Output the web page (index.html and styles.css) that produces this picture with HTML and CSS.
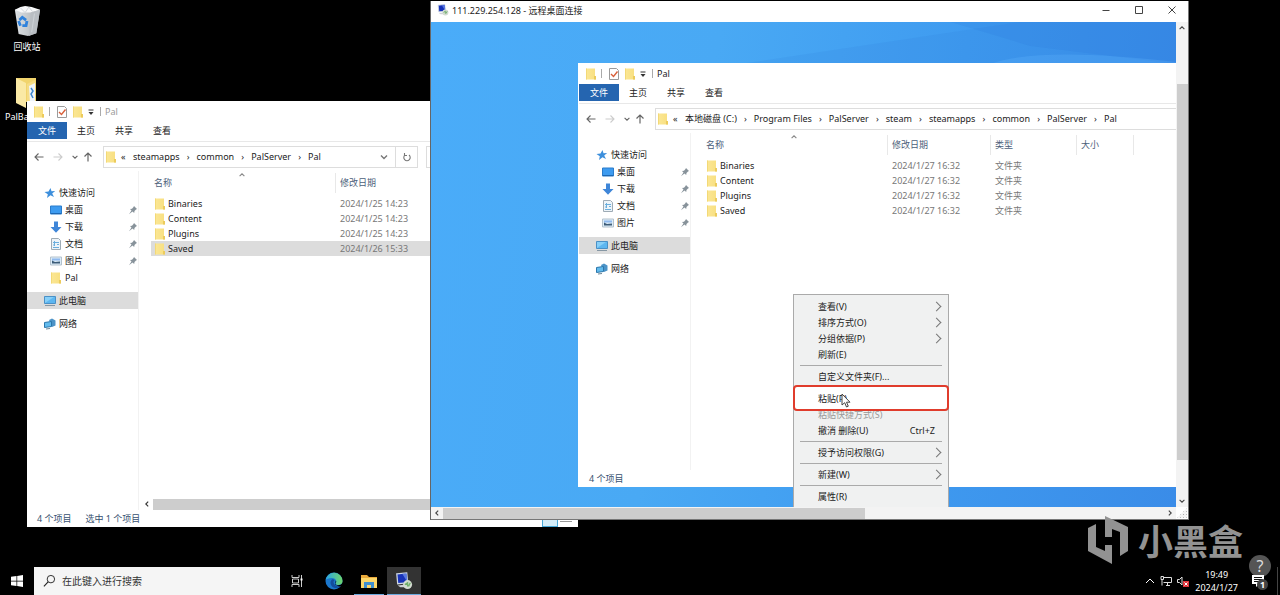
FILE: index.html
```
<!DOCTYPE html>
<html lang="zh-CN">
<head>
<meta charset="utf-8">
<title>远程桌面连接</title>
<link rel="stylesheet" href="styles.css">
</head>
<body>
<svg class="defs" aria-hidden="true">
  <linearGradient id="gFolder" x1="0" y1="0" x2="1" y2="0"><stop offset="0" stop-color="#fbe795"/><stop offset="1" stop-color="#f8df80"/></linearGradient>
  <linearGradient id="gEdge" x1="0" y1="0" x2="1" y2="0"><stop offset="0" stop-color="#2aa6e6"/><stop offset="1" stop-color="#6fd66a"/></linearGradient>
  <linearGradient id="gBin" x1="0" y1="0" x2="1" y2="0"><stop offset="0" stop-color="#dfe3e6"/><stop offset="1" stop-color="#a9afb4"/></linearGradient>
  <symbol id="folder" viewBox="0 0 12 12"><path d="M1 .5h9v8h1v3H1z" fill="url(#gFolder)"/><path d="M9 8h2v3.500H9z" fill="#eccb5c"/><path d="M1 .5h1v11H1z" fill="#f3d977"/></symbol>
  <symbol id="check" viewBox="0 0 12 12"><path d="M1.500.5h7l2 2v9h-9z" fill="#fff" stroke="#9b9b9b"/><path d="M3 6l2.500 2.500L9.500 3.500" fill="none" stroke="#d9603a" stroke-width="1.400"/></symbol>
  <symbol id="more" viewBox="0 0 8 8"><path d="M1.500 2h5" stroke="#333"/><path d="M1.500 4h5L4 7z" fill="#333"/></symbol>
  <symbol id="star" viewBox="0 0 12 12"><path d="M6.500 1l1 3.300 3.700-.3-3 2.500 1.800 3.500-3.500-1.800L3 11l.8-3.800L.5 5l4-.5z" fill="#3d8fdc"/></symbol>
  <symbol id="desk" viewBox="0 0 12 12"><path d="M.5 2h11v8H.5z" fill="#3d9bf0" stroke="#2b7ccb"/><path d="M1 9h10v1H1z" fill="#1e67b1"/></symbol>
  <symbol id="down" viewBox="0 0 12 12"><path d="M4 .5h4V6h3.500L6 11.800.5 6H4z" fill="#3f86d8"/></symbol>
  <symbol id="doc" viewBox="0 0 12 12"><path d="M1.500.5h7l2 2v9h-9z" fill="#edf4f9" stroke="#9eabb5"/><path d="M3 4.500h6M3 7h2M7 6.500h2M3 9.500h6M4.500 3v5" stroke="#6aaedd"/></symbol>
  <symbol id="pic" viewBox="0 0 12 12"><path d="M.5 2h11v8H.5z" fill="#dcecf8" stroke="#b4c2cd"/><path d="M2 3.500h8v2H2z" fill="#8fb9ee"/><path d="M2 5.500l3 1.500 5-.5v2H2z" fill="#3d5c78"/></symbol>
  <symbol id="pc" viewBox="0 0 12 12"><path d="M.5 1.500h11v7H.5z" fill="#5db6f0" stroke="#4a90c6"/><path d="M1 8L10 2H1z" fill="#87cff8"/><path d="M1 10.500h10" stroke="#8697a4"/></symbol>
  <symbol id="net" viewBox="0 0 12 12"><path d="M5 2l3-1.500 3.500 2v5L8 9z" fill="#4c93c7"/><path d="M.5 4.500l7-1v5l-7 1z" fill="#62bbed" stroke="#2b76ab"/><path d="M2 11l4-.5" stroke="#6d8594"/></symbol>
  <symbol id="pin" viewBox="0 0 10 10"><path d="M6 1l3 3-1 .5-1.500 1.500-.3 2L4.500 6.500 1 9.300 3.500 5.500 2 4l2-.3L5.500 2z" fill="#87929a"/></symbol>
  <symbol id="back" viewBox="0 0 10 10"><path d="M9.500 5H1M4.500 1.500L1 5l3.500 3.500" fill="none" stroke="currentColor" stroke-width="1.100"/></symbol>
  <symbol id="fwd" viewBox="0 0 10 10"><path d="M.5 5H9M5.500 1.500L9 5 5.500 8.500" fill="none" stroke="currentColor" stroke-width="1.100"/></symbol>
  <symbol id="up" viewBox="0 0 10 10"><path d="M5 9.500V1M1.500 4.500L5 1l3.500 3.500" fill="none" stroke="currentColor" stroke-width="1.200"/></symbol>
  <symbol id="chev" viewBox="0 0 10 10"><path d="M2 3.500l3 3 3-3" fill="none" stroke="currentColor" stroke-width="1.400"/></symbol>
  <symbol id="rdp" viewBox="0 0 20 20"><path d="M2 2l11-1 1 11-11 1z" fill="#1732b8" stroke="#cfd8e4" stroke-width="1.400"/><path d="M8 2l5-.4.8 9.500z" fill="#5877e0"/><path d="M3 15l9-1 2 3H6z" fill="#cdd1d5"/><circle cx="14" cy="14" r="5" fill="#d3dbd1"/><path d="M11 14l3-2v4M17 12l-2 4" stroke="#6fae6a" stroke-width="1.500" fill="none"/></symbol>
</svg>

<main class="desktop">
  <div class="shortcut bin">
    <svg viewBox="0 0 30 34"><path d="M2 5h27l-4 25-9 3-10-2z" fill="url(#gBin)"/><path d="M2 5l6-3 5-1 7 1 9 3-10 3H9z" fill="#f7f8f9"/><path d="M19 8l10-3-4 25-8 3z" fill="#b9bec3"/><path d="M5 9l4 20M23 9l-3 20M8 3l5 5 4-6 4 5" stroke="#cfd4d8" fill="none"/><path d="M7 16l3-3 4 3M15 17l-1 5-4 0M8 22l-2-5" stroke="#2f82dc" stroke-width="3" fill="none"/></svg>
    <span>回收站</span>
  </div>
  <div class="shortcut pal">
    <svg viewBox="0 0 26 32"><path d="M2 1h20v24H2z" fill="#f1d46d"/><path d="M2 1l10 5v25L2 26z" fill="#fae9a5"/><path d="M13 7l8-4v22h-8z" fill="#f5dc86"/><path d="M15 9l6-3v20h-5z" fill="#eef4fa"/><path d="M17 11l2 3-2 3 2 4" stroke="#3c86cf" stroke-width="1.500" fill="none"/></svg>
    <span>PalBackup</span>
  </div>

  <section class="explorer local" aria-label="Pal">
    <header class="caption inactive"><svg class="i12"><use href="#folder"/></svg><i class="bar"></i><svg class="i12"><use href="#check"/></svg><svg class="i12"><use href="#folder"/></svg><svg class="i8"><use href="#more"/></svg><i class="bar"></i><span>Pal</span></header>
    <nav class="tabs"><button class="tab file">文件</button><button class="tab">主页</button><button class="tab">共享</button><button class="tab">查看</button></nav>
    <div class="toolbar">
      <div class="nav"><button aria-label="后退"><svg class="i10"><use href="#back"/></svg></button><button class="off" aria-label="前进"><svg class="i10"><use href="#fwd"/></svg></button><button class="small" aria-label="最近"><svg class="i8"><use href="#chev"/></svg></button><button class="small" aria-label="上移"><svg class="i10"><use href="#up"/></svg></button></div>
      <div class="address short">
        <svg class="i12"><use href="#folder"/></svg><span class="lead">«</span>
        <a href="#">steamapps</a><b>›</b><a href="#">common</a><b>›</b><a href="#">PalServer</a><b>›</b><a href="#">Pal</a>
        <button class="drop" aria-label="历史"><svg class="i10"><use href="#chev"/></svg></button>
        <button class="refresh" aria-label="刷新"><svg viewBox="0 0 10 10" class="i10"><path d="M3 3a3.200 3.200 0 1 0 4 0M2.500 1v2.500H5" fill="none" stroke="#777" stroke-width="1.100"/></svg></button>
      </div>
      <input class="find" aria-label="搜索">
    </div>
    <div class="body">
      <ul class="tree">
        <li><svg class="i12"><use href="#star"/></svg>快速访问</li>
        <li class="sub"><svg class="i12"><use href="#desk"/></svg>桌面<svg class="pin"><use href="#pin"/></svg></li>
        <li class="sub"><svg class="i12"><use href="#down"/></svg>下载<svg class="pin"><use href="#pin"/></svg></li>
        <li class="sub"><svg class="i12"><use href="#doc"/></svg>文档<svg class="pin"><use href="#pin"/></svg></li>
        <li class="sub"><svg class="i12"><use href="#pic"/></svg>图片<svg class="pin"><use href="#pin"/></svg></li>
        <li class="sub"><svg class="i12"><use href="#folder"/></svg>Pal</li>
        <li class="current"><svg class="i12"><use href="#pc"/></svg>此电脑</li>
        <li><svg class="i12"><use href="#net"/></svg>网络</li>
      </ul>
      <div class="files">
        <table>
          <colgroup><col class="c-name"><col class="c-date"><col class="c-type"><col class="c-size"><col></colgroup>
          <thead><tr><th class="sorted">名称<svg class="i8 caret"><use href="#chev"/></svg></th><th>修改日期</th><th>类型</th><th>大小</th><th></th></tr></thead>
          <tbody>
            <tr><td><svg class="i12"><use href="#folder"/></svg>Binaries</td><td>2024/1/25 14:23</td><td>文件夹</td><td></td><td></td></tr>
            <tr><td><svg class="i12"><use href="#folder"/></svg>Content</td><td>2024/1/25 14:23</td><td>文件夹</td><td></td><td></td></tr>
            <tr><td><svg class="i12"><use href="#folder"/></svg>Plugins</td><td>2024/1/25 14:23</td><td>文件夹</td><td></td><td></td></tr>
            <tr class="picked"><td><svg class="i12"><use href="#folder"/></svg>Saved</td><td>2024/1/26 15:33</td><td>文件夹</td><td></td><td></td></tr>
          </tbody>
        </table>
        <div class="hbar"><svg class="i8 left"><use href="#chev"/></svg><i></i></div>
      </div>
    </div>
    <footer class="status"><span>4 个项目</span><span>选中 1 个项目</span><i class="view on"></i><i class="view"></i></footer>
  </section>

  <section class="remote" aria-label="远程桌面连接">
    <header class="rtitle"><svg class="i12"><use href="#rdp"/></svg><span>111.229.254.128 - 远程桌面连接</span>
      <div class="winbtns"><button aria-label="最小化"><svg viewBox="0 0 10 10" class="i10"><path d="M1.500 5.500h7" stroke="#444"/></svg></button><button aria-label="最大化"><svg viewBox="0 0 10 10" class="i10"><path d="M1.500 1.500h7v7h-7z" fill="none" stroke="#444"/></svg></button><button aria-label="关闭"><svg viewBox="0 0 10 10" class="i10"><path d="M1.500 1.500l7 7M8.500 1.500l-7 7" stroke="#444"/></svg></button></div>
    </header>
    <div class="screen">
      <svg class="rays" viewBox="0 0 746 486" preserveAspectRatio="none"><path d="M746 0H590L310 42H746z" fill="#2369d0" opacity=".1"/><path d="M746 42L600 24 520 0h226z" fill="#1c62d0" opacity=".1"/><path d="M560 42Q610 24 746 40v2z" fill="#63b9ff" opacity=".25"/></svg>
      <section class="explorer guest" aria-label="Pal">
        <header class="caption"><svg class="i12"><use href="#folder"/></svg><i class="bar"></i><svg class="i12"><use href="#check"/></svg><svg class="i12"><use href="#folder"/></svg><svg class="i8"><use href="#more"/></svg><i class="bar"></i><span>Pal</span></header>
        <nav class="tabs"><button class="tab file">文件</button><button class="tab">主页</button><button class="tab">共享</button><button class="tab">查看</button></nav>
        <div class="toolbar">
          <div class="nav"><button aria-label="后退"><svg class="i10"><use href="#back"/></svg></button><button class="off" aria-label="前进"><svg class="i10"><use href="#fwd"/></svg></button><button class="small" aria-label="最近"><svg class="i8"><use href="#chev"/></svg></button><button class="small" aria-label="上移"><svg class="i10"><use href="#up"/></svg></button></div>
          <div class="address">
            <svg class="i12"><use href="#folder"/></svg><span class="lead">«</span>
            <a href="#">本地磁盘 (C:)</a><b>›</b><a href="#">Program Files</a><b>›</b><a href="#">PalServer</a><b>›</b><a href="#">steam</a><b>›</b><a href="#">steamapps</a><b>›</b><a href="#">common</a><b>›</b><a href="#">PalServer</a><b>›</b><a href="#">Pal</a>
          </div>
        </div>
        <div class="body">
          <ul class="tree">
            <li><svg class="i12"><use href="#star"/></svg>快速访问</li>
            <li class="sub"><svg class="i12"><use href="#desk"/></svg>桌面<svg class="pin"><use href="#pin"/></svg></li>
            <li class="sub"><svg class="i12"><use href="#down"/></svg>下载<svg class="pin"><use href="#pin"/></svg></li>
            <li class="sub"><svg class="i12"><use href="#doc"/></svg>文档<svg class="pin"><use href="#pin"/></svg></li>
            <li class="sub"><svg class="i12"><use href="#pic"/></svg>图片<svg class="pin"><use href="#pin"/></svg></li>
            <li class="current"><svg class="i12"><use href="#pc"/></svg>此电脑</li>
            <li><svg class="i12"><use href="#net"/></svg>网络</li>
          </ul>
          <div class="files">
            <table>
              <colgroup><col class="c-name"><col class="c-date"><col class="c-type"><col class="c-size"><col></colgroup>
              <thead><tr><th class="sorted">名称<svg class="i8 caret"><use href="#chev"/></svg></th><th>修改日期</th><th>类型</th><th>大小</th><th></th></tr></thead>
              <tbody>
                <tr><td><svg class="i12"><use href="#folder"/></svg>Binaries</td><td>2024/1/27 16:32</td><td>文件夹</td><td></td><td></td></tr>
                <tr><td><svg class="i12"><use href="#folder"/></svg>Content</td><td>2024/1/27 16:32</td><td>文件夹</td><td></td><td></td></tr>
                <tr><td><svg class="i12"><use href="#folder"/></svg>Plugins</td><td>2024/1/27 16:32</td><td>文件夹</td><td></td><td></td></tr>
                <tr><td><svg class="i12"><use href="#folder"/></svg>Saved</td><td>2024/1/27 16:32</td><td>文件夹</td><td></td><td></td></tr>
              </tbody>
            </table>
          </div>
        </div>
        <footer class="status"><span>4 个项目</span></footer>
      </section>
      <div class="menu" role="menu">
        <button role="menuitem">查看(V)<i class="more"></i></button>
        <button role="menuitem">排序方式(O)<i class="more"></i></button>
        <button role="menuitem">分组依据(P)<i class="more"></i></button>
        <button role="menuitem">刷新(E)</button>
        <hr>
        <button role="menuitem">自定义文件夹(F)...</button>
        <hr>
        <button role="menuitem" class="paste">粘贴(P)</button>
        <button role="menuitem" disabled>粘贴快捷方式(S)</button>
        <button role="menuitem">撤消 删除(U)<kbd>Ctrl+Z</kbd></button>
        <hr>
        <button role="menuitem">授予访问权限(G)<i class="more"></i></button>
        <hr>
        <button role="menuitem">新建(W)<i class="more"></i></button>
        <hr>
        <button role="menuitem">属性(R)</button>
      </div>
      <svg class="pointer" viewBox="0 0 10 15"><path d="M1 1v11l2.700-2.300L5.500 14l1.800-.8L5.500 9.200H9z" fill="#fff" stroke="#444"/></svg>
    </div>
    <div class="vscroll"><svg class="i8 flip"><use href="#chev"/></svg><i></i><svg class="i8"><use href="#chev"/></svg></div>
    <div class="hscroll"><svg class="i8 left"><use href="#chev"/></svg><i></i><svg class="i8 right"><use href="#chev"/></svg></div>
    <div class="grip"></div>
  </section>

  <div class="brand">
    <svg viewBox="0 0 42 50"><path d="M1 13l8-4v23l9 4v-6h7v19L1 36z"/><path d="M18 1l23 11v24l-8 5V17l-8-3v8h-7z"/></svg>
    <span>小黑盒</span>
  </div>
  <button class="help">?</button>
</main>

<footer class="taskbar">
  <button class="start" aria-label="开始"><svg viewBox="0 0 12 12"><path d="M0 1.700L5.500 1v4.700H0zM6.200.9L12 0v5.700H6.200zM0 6.400h5.500V11L0 10.300zM6.200 6.400H12V12l-5.800-.9z" fill="#fff"/></svg></button>
  <label class="search"><svg viewBox="0 0 14 14"><circle cx="8.500" cy="5" r="4" fill="none" stroke="#222"/><path d="M5.500 8L1 12.800" stroke="#222" stroke-width="1.200"/></svg><input type="text" placeholder="在此键入进行搜索"></label>
  <button class="app" aria-label="任务视图"><svg class="i12" viewBox="0 0 12 12"><path d="M1 0v2.500h7V0M1 12V9.500h7V12M1.500 4h6v4h-6zM10.500 0v12" fill="none" stroke="#ccc"/><path d="M9.500 3.500h2v2h-2z" fill="#fff"/></svg></button>
  <button class="app edge" aria-label="Edge"><svg viewBox="0 0 18 18"><circle cx="9" cy="9" r="8.500" fill="#1b77cc"/><path d="M.6 8A8.500 8.500 0 0 1 17.500 9c0 3-2.500 4-4.500 4s-3-1-2-2.500S10.500 6 7 6 1.500 7 .6 8z" fill="url(#gEdge)"/><path d="M7 7.500c-3 2-1.500 8.500 4 8.500 2 0 4-1 5-2-2 .5-5 .5-6.500-1.500S8.500 9 9.500 8.500C9 7.500 8 7 7 7.500z" fill="#134d9c"/><path d="M10.800 8.500c.8 1 .2 2-.3 2.800-.5 1.400 1 1.900 2.500 1.900 2 0 3.500-.8 5-2.500v3l-4 .8-4-2z" fill="#000"/></svg></button>
  <button class="app open" aria-label="文件资源管理器"><svg viewBox="0 0 18 18"><path d="M1 3h6l2 2h8v11H1z" fill="#e9a93a"/><path d="M1 6h16v10H1z" fill="#fbd66b"/><path d="M4 16v-6h10v6h-3v-3H7v3z" fill="#3f8fd0"/></svg></button>
  <button class="app open active" aria-label="远程桌面"><svg viewBox="0 0 20 20"><use href="#rdp"/></svg></button>
  <div class="tray">
    <svg viewBox="0 0 10 10" class="i10"><path d="M1 7l4-4 4 4" fill="none" stroke="#fff"/></svg>
    <svg viewBox="0 0 12 12" class="i12"><path d="M3.500 2.500h8v5h-8M6 10.500h4M7.500 7.500v3M1 1.500h2.500v3H1zM2 4.500v6" fill="none" stroke="#ddd"/></svg>
    <svg viewBox="0 0 12 12" class="i12"><path d="M.5 4.500h2L5 2v8L2.500 7.500h-2z" fill="none" stroke="#ddd"/><path d="M6 6h6v6H6z" fill="#e0323a"/><path d="M7.500 7.500l3 3M10.500 7.500l-3 3" stroke="#fff"/></svg>
    <time>19:49<br>2024/1/27</time>
    <div class="notes"><svg viewBox="0 0 12 12" class="i12"><path d="M0 0h12v9H7l-3 3V9H0z" fill="#fff"/><path d="M2 2.500h8M2 4.500h8M2 6.500h5" stroke="#111"/></svg><span>1</span></div>
  </div>
</footer>
</body>
</html>
```
FILE: styles.css
```
* { box-sizing: border-box; }
body { margin: 0; height: 100vh; display: flex; flex-direction: column; overflow: hidden; background: #000; color: #222; font: 9px/15px "Noto Sans", "Noto Sans CJK SC", sans-serif; }
button, input { font: inherit; color: inherit; border: 0; padding: 0; margin: 0; background: none; }
button { display: flex; align-items: center; justify-content: center; }
a { color: inherit; text-decoration: none; }
svg { display: block; flex: none; }
.defs { position: absolute; width: 0; height: 0; }
.i12 { width: 12px; height: 12px; }
.i10 { width: 10px; height: 10px; }
.i8 { width: 8px; height: 8px; }
.left { transform: rotate(90deg); }
.right { transform: rotate(-90deg); }
.flip { transform: rotate(180deg); }

.desktop { position: relative; flex: 1; min-height: 0; }
.shortcut { position: absolute; display: flex; flex-direction: column; align-items: center; color: #fff; }
.bin { left: 13px; top: 5px; gap: 2px; }
.bin svg { width: 28px; height: 32px; }
.pal { left: 5px; top: 77px; align-items: flex-start; }
.pal svg { width: 26px; height: 32px; margin-left: 9px; }

.explorer { position: absolute; display: flex; flex-direction: column; background: #fff; overflow: hidden; }
.local { left: 27px; top: 101px; width: 551px; height: 426px; }
.guest { left: 147px; right: -60px; top: 41px; bottom: 20px; border-left: 1px solid #fff; }
.caption { display: flex; align-items: center; height: 21px; padding-left: 6px; }
.caption .bar { width: 1px; height: 9px; margin: 0 6px 0 4px; background: #aaa; }
.caption .i12 + .i12 { margin-left: 4px; }
.caption .i8 { margin-left: 3px; }
.caption .i8 + .bar { margin: 0 4px 0 5px; }
.inactive span { color: #999; }
.tabs { display: flex; height: 20px; border-bottom: 1px solid #e8e8e8; padding-bottom: 2px; }
.tab { width: 38px; }
.file { width: 40px; background: #2565b0; color: #fff; }
.toolbar { display: flex; align-items: center; height: 29px; gap: 8px; flex: none; }
.nav { display: flex; align-items: center; width: 68px; padding-left: 3px; color: #666; }
.nav button { width: 21px; }
.nav .small { width: 15px; }
.nav .off { color: #ccc; }
.address { flex: 1; display: flex; align-items: center; height: 22px; border: 1px solid #ddd; padding-left: 1px; white-space: nowrap; }
.short { flex: none; width: 315px; }
.lead { width: 12px; margin-left: 4px; }
.address b { width: 17px; text-align: center; font-weight: 400; }
.drop { margin-left: auto; width: 22px; height: 20px; color: #777; }
.refresh { width: 22px; height: 20px; border-left: 1px solid #ddd; }
.find { flex: 1; min-width: 0; height: 22px; border: 1px solid #ddd; }
.body { flex: 1; display: flex; min-height: 0; gap: 12px; }
.tree { width: 112px; margin: 0; padding: 13px 0 0; list-style: none; border-right: 1px solid #f2f2f2; }
.tree li { display: flex; align-items: center; height: 17px; gap: 3px; padding-left: 17px; margin-bottom: 6px; }
.tree li:has(+ .sub) { margin-bottom: 0; }
.tree .sub { padding-left: 23px; }
.tree .current { background: #dcdcdc; }
.pin { width: 10px; height: 10px; margin-left: auto; }
.files { flex: 1; min-width: 0; display: flex; flex-direction: column; }
table { table-layout: fixed; border-collapse: collapse; width: 100%; min-width: 480px; }
.c-name { width: 184px; }
.c-date { width: 103px; }
.c-type { width: 86px; }
.c-size { width: 57px; }
th { height: 25px; padding: 0 0 2px 5px; text-align: left; font-weight: 400; color: #4c607a; background: linear-gradient(#e8e8e8, #e8e8e8) 0 2px / 1px 20px no-repeat; }
.sorted { position: relative; padding-left: 3px; background: none; }
.caret { position: absolute; left: 87px; top: 0; color: #888; transform: rotate(180deg); }
td { height: 15px; padding: 0 0 0 5px; color: #777; white-space: nowrap; }
td:first-child { display: flex; align-items: center; gap: 2px; padding-left: 3px; color: #222; }
.picked { background: #dcdcdc; }
.hbar { display: flex; align-items: center; gap: 2px; height: 12px; margin-top: auto; margin-left: -8px; color: #333; }
.hbar i { flex: 1; height: 11px; background: #cdcdcd; }
.status { display: flex; align-items: center; gap: 14px; height: 17px; padding-left: 10px; color: #36506f; flex: none; }
.view { width: 12px; height: 8px; align-self: flex-end; border-top: 3px double #999; margin-right: 6px; margin-left: -12px; }
.view.on { width: 16px; height: 14px; border: 1px solid #49a9d8; background: #d4edf8; margin-left: auto; margin-right: 0; }

.remote { position: absolute; left: 431px; right: 91px; top: 1px; height: 519px; display: grid; grid-template: 21px 1fr 12px / 1fr 12px; background: #fff; border: 0 solid #777; border-width: 0 1px 1px 0; box-shadow: -1px 0 #666; }
.rtitle { grid-column: 1 / 3; display: flex; align-items: center; gap: 3px; padding-left: 6px; height: 18px; }
.winbtns { display: flex; margin-left: auto; }
.winbtns button { width: 33px; height: 18px; }
.screen { position: relative; overflow: hidden; background: linear-gradient(100deg, #4aacf9 0%, #49a9f4 35%, #3f9bf0 65%, #3a8ce8 100%); }
.rays { position: absolute; inset: 0; width: 100%; height: 100%; }
.vscroll { display: flex; flex-direction: column; align-items: center; padding: 2px 0; background: #f3f3f3; color: #444; }
.vscroll i { width: 11px; height: 376px; margin: 52px 0 auto; background: #cdcdcd; }
.hscroll { display: flex; align-items: center; padding: 0 2px; gap: 2px; background: #f3f3f3; color: #444; }
.hscroll i { width: 57%; height: 11px; margin-right: auto; background: #cdcdcd; }
.grip { background: radial-gradient(circle, #aaa 1px, transparent 1px) 0 0 / 3px 3px #f3f3f3; clip-path: polygon(90% 10%, 90% 90%, 10% 90%); }

.menu { position: absolute; left: 362px; top: 272px; width: 156px; padding: 3px 0 20px; background: #f0f1f1; border: 1px solid #aaa; }
.menu button { width: 100%; height: 16px; padding: 0 8px 0 24px; justify-content: flex-start; color: #222; }
.menu button:disabled { color: #999; }
.menu hr { height: 1px; margin: 3px 6px 2px; border: 0; background: #aaa; }
.menu .more { width: 7px; height: 7px; margin: 0 0 0 auto; border: solid #777; border-width: 1px 1px 0 0; transform: rotate(45deg); }
.menu kbd { margin-left: auto; margin-right: 5px; font: inherit; }
.menu .paste { position: relative; height: 24px; margin: -4px 0; background: #fff; outline: 2px solid #e03c2c; outline-offset: -1px; border-radius: 3px; }
.pointer { position: absolute; left: 410px; top: 371px; width: 10px; height: 15px; }

.brand { position: absolute; right: 37px; bottom: 2px; display: flex; align-items: center; gap: 9px; color: #929292; font-size: 35px; line-height: 46px; font-weight: 700; font-family: "Noto Sans CJK SC", sans-serif; }
.brand svg { width: 42px; height: 50px; fill: currentColor; }
.help { position: absolute; right: 9px; bottom: -10px; width: 22px; height: 22px; border-radius: 50%; background: #555; color: #ddd; font-size: 16px; }

.taskbar { display: flex; height: 28px; color: #fff; }
.start { width: 34px; }
.start svg { width: 12px; height: 12px; }
.search { display: flex; align-items: center; gap: 6px; width: 246px; padding-left: 9px; background: #f5f5f5; color: #333; font-size: 10px; }
.search svg { width: 13px; height: 14px; }
.search input { flex: 1; min-width: 0; outline: 0; }
.search input::placeholder { color: #333; opacity: 1; }
.app { width: 34px; border-bottom: 1px solid transparent; }
.edge { margin-left: 3px; }
.edge svg, .open svg { width: 18px; height: 18px; }
.open { width: 30px; border-color: #6aa9dd; margin-left: 3px; }
.active { width: 34px; background: #333; }
.tray { display: flex; align-items: center; gap: 5px; margin-left: auto; margin-right: 2px; padding-right: 13px; border-right: 1px solid #444; }
.tray time { margin: 0 9px 0 1px; text-align: center; line-height: 13px; }
.notes { position: relative; }
.notes span { position: absolute; left: 5px; top: 4px; width: 11px; height: 11px; border-radius: 50%; background: #444; line-height: 11px; text-align: center; font-weight: 700; }
```
